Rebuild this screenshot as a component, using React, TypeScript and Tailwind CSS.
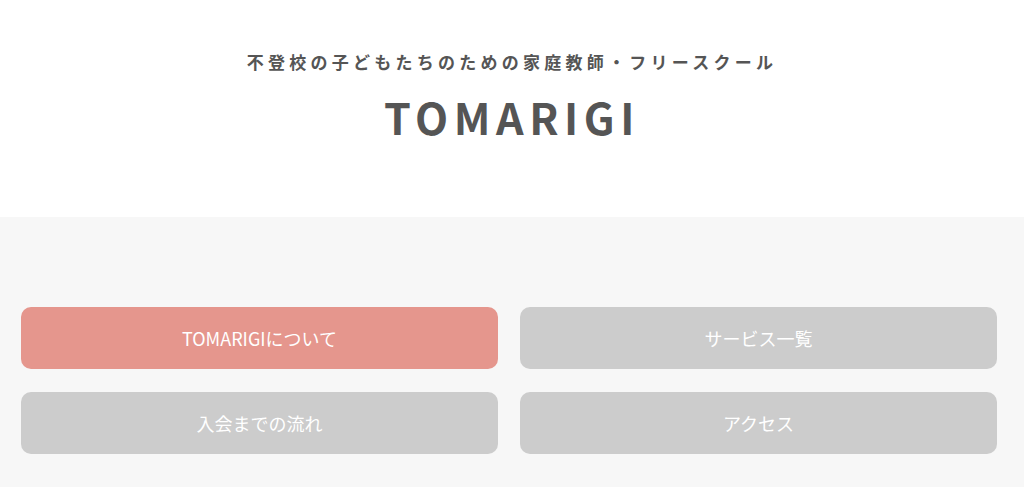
// App - TOMARIGI header with nav buttons
const font = 'font-["Noto_Sans_CJK_JP","Noto_Sans",sans-serif]'

const links = [
  { label: 'TOMARIGIについて', active: true },
  { label: 'サービス一覧', active: false },
  { label: '入会までの流れ', active: false },
  { label: 'アクセス', active: false },
]

export default function App() {
  return (
    <div className={`${font} min-h-[487px] bg-[#f7f7f7]`}>
      {/* Header */}
      <header className="flex h-[217px] flex-col items-center bg-white pt-[50px]">
        <p className="text-[17px] font-bold leading-6 tracking-[0.25em] text-[#555]">
          不登校の子どもたちのための家庭教師・フリースクール
        </p>
        <h1 className="mt-[14px] text-[43px] font-bold leading-[56px] tracking-[0.13em] text-[#555]">
          TOMARIGI
        </h1>
      </header>

      {/* Nav */}
      <nav className="grid grid-cols-2 gap-x-[22px] gap-y-[23px] pt-[90px] pl-[21px] pr-[27px]">
        {links.map((l) => (
          <a
            key={l.label}
            href="#"
            className={`flex h-[62px] items-center justify-center rounded-[10px] text-[18px] text-white ${
              l.active ? 'bg-[#e5968d]' : 'bg-[#cccccc]'
            }`}
          >
            {l.label}
          </a>
        ))}
      </nav>
    </div>
  )
}
